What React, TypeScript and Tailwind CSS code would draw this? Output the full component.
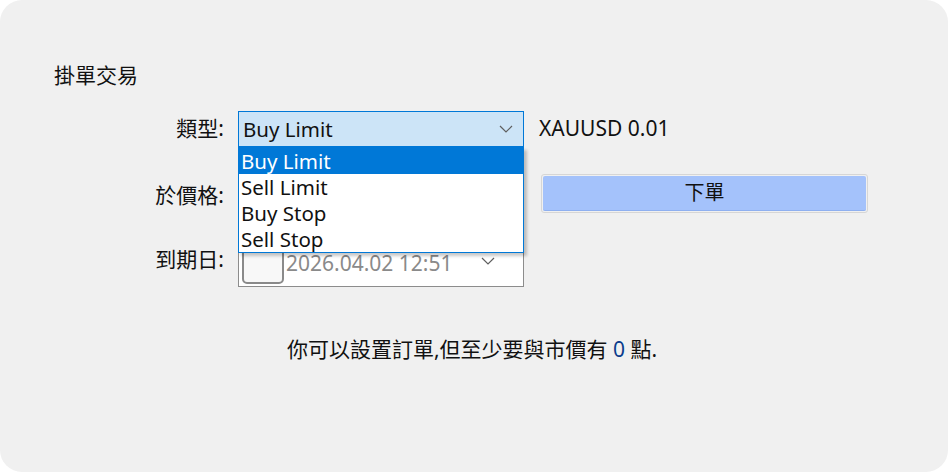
import React from "react";

const FONT = { fontFamily: '"Noto Sans", "Noto Sans CJK TC", sans-serif' };

function Chevron({ className = "" }: { className?: string }) {
  return (
    <svg width="14" height="8" viewBox="0 0 14 8" className={className}>
      <path d="M1 1 L7 7 L13 1" fill="none" stroke="#5f5f5f" strokeWidth="1.2" />
    </svg>
  );
}

export default function App() {
  const items = ["Buy Limit", "Sell Limit", "Buy Stop", "Sell Stop"];
  return (
    <div className="w-[948px] h-[472px] bg-white" style={FONT}>
      <div className="w-full h-full rounded-[22px] bg-[#f0f0f0] text-[#111] flex flex-col">
        <div className="pl-[54px] pt-[61px] text-[21px] leading-[28px]">掛單交易</div>

        {/* Row 1 */}
        <div className="flex items-center mt-[22px] h-[36px]">
          <div className="w-[224px] text-right text-[21px]">類型:</div>
          <div className="relative ml-[14px] w-[286px] h-[36px]">
            <div className="w-full h-full border border-[#0078d7] bg-[#cce4f7] flex items-center justify-between pl-[4px] pr-[10px] text-[20.5px]">
              <span>Buy Limit</span>
              <Chevron />
            </div>
            <div className="absolute left-0 top-[36px] w-full z-10 bg-white border border-[#0078d7] shadow-[3px_3px_3px_rgba(0,0,0,0.22)] text-[20.5px] leading-[26px]">
              {items.map((it, i) => (
                <div
                  key={it}
                  className={
                    i === 0
                      ? "h-[26px] pl-[2px] bg-[#0078d7] text-white"
                      : "h-[26px] pl-[2px] text-[#111]"
                  }
                >
                  {it}
                </div>
              ))}
            </div>
          </div>
          <div className="ml-[15px] text-[21px]">XAUUSD 0.01</div>
        </div>

        {/* Row 2 */}
        <div className="flex items-center mt-[27px] h-[39px]">
          <div className="w-[224px] text-right text-[21px] pt-[5px]">於價格:</div>
          <div className="ml-[14px] w-[286px] h-[39px] bg-white border border-[#7a7a7a]" />
          <div className="ml-[17px] w-[327px] h-[39px] rounded-[3px] border border-[#d6d6d6] p-[1px]">
            <div className="w-full h-full rounded-[2px] bg-[#a4c2fb] border-b border-[#8fb0f0] flex items-center justify-center text-[20px]">
              下單
            </div>
          </div>
        </div>

        {/* Row 3 */}
        <div className="flex items-center mt-[22px] h-[52px]">
          <div className="w-[224px] text-right text-[21px] pb-[2px]">到期日:</div>
          <div className="ml-[14px] w-[286px] h-[52px] bg-white border border-[#8c8c8c] flex items-center pl-[3px] pr-[28px]">
            <div className="w-[42px] h-[43px] rounded-[5px] border-2 border-[#8a8a8a] bg-[#f8f8f8] mt-[2px]" />
            <span className="ml-[2px] mt-[4px] text-[21px] leading-[22px] text-[#8a8a8a]">2026.04.02 12:51</span>
            <Chevron className="ml-auto" />
          </div>
        </div>

        <div className="mt-[48px] text-center text-[21px] leading-[28px] pr-[4px]">
          你可以設置訂單,但至少要與市價有 <span className="text-[#0b3d8c]">0</span> 點.
        </div>
      </div>
    </div>
  );
}
